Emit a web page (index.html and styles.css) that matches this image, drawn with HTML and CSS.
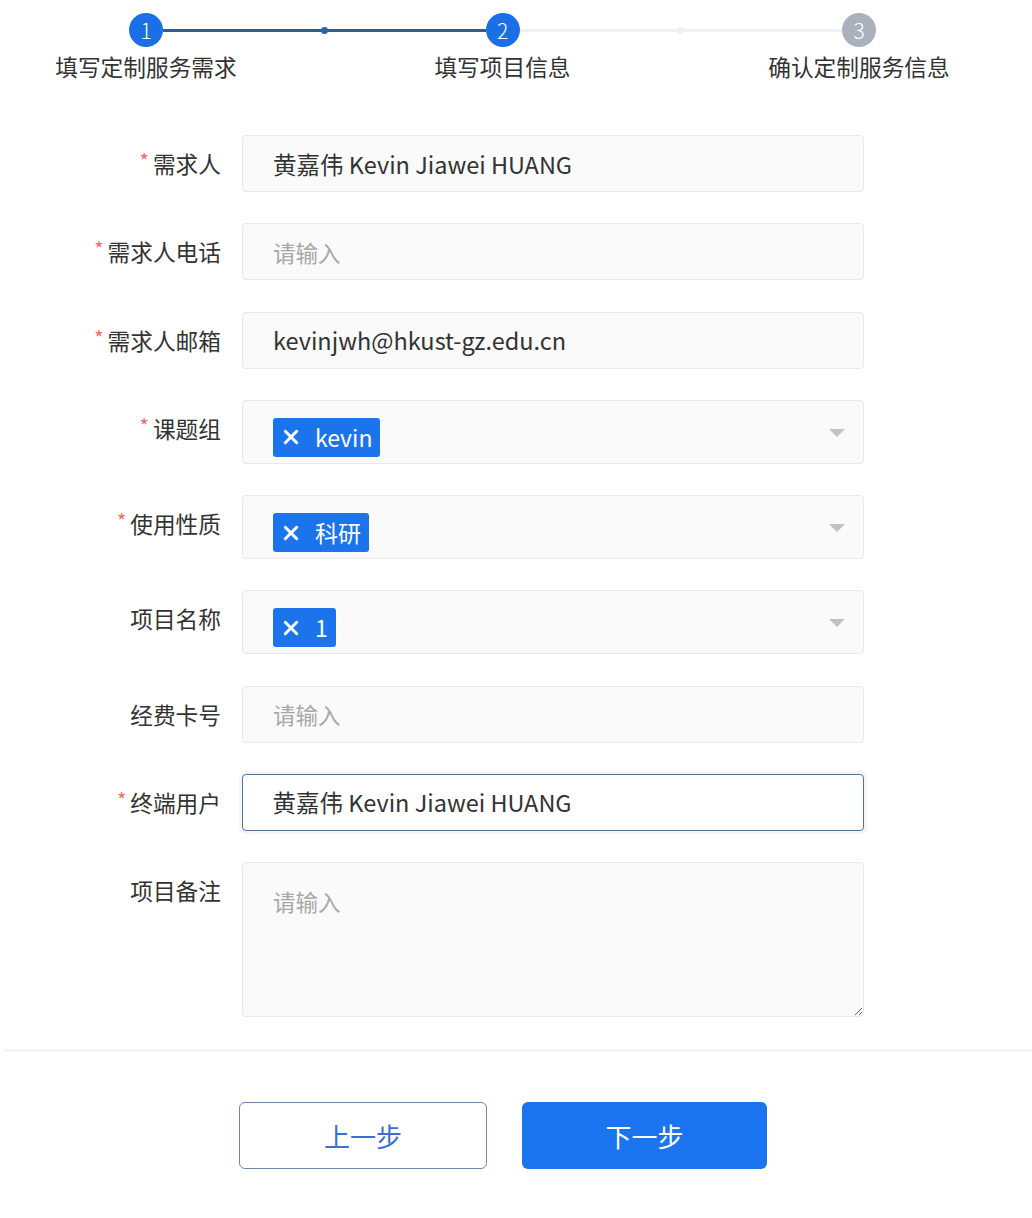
FILE: index.html
```html
<!DOCTYPE html>
<html lang="zh-CN">
<head>
<meta charset="utf-8">
<title>填写项目信息</title>
<link rel="stylesheet" href="styles.css">
</head>
<body>
<div class="page">
  <div class="steps">
    <div class="step-track">
      <span class="dot dot-done">1</span>
      <span class="link link-done"></span>
      <span class="dot dot-done">2</span>
      <span class="link"></span>
      <span class="dot dot-todo">3</span>
    </div>
    <div class="step-labels">
      <span>填写定制服务需求</span>
      <span>填写项目信息</span>
      <span>确认定制服务信息</span>
    </div>
  </div>

  <form class="form">
    <div class="row">
      <label class="label req">需求人</label>
      <input class="field" type="text" value="黄嘉伟 Kevin Jiawei HUANG">
    </div>
    <div class="row">
      <label class="label req">需求人电话</label>
      <input class="field" type="text" placeholder="请输入">
    </div>
    <div class="row">
      <label class="label req">需求人邮箱</label>
      <input class="field" type="text" value="kevinjwh@hkust-gz.edu.cn">
    </div>
    <div class="row">
      <label class="label req">课题组</label>
      <div class="select">
        <span class="tag"><svg class="tag-x" viewBox="0 0 14 14"><path d="M2 2L12 12M12 2L2 12"/></svg>kevin</span>
        <span class="caret"></span>
      </div>
    </div>
    <div class="row">
      <label class="label req">使用性质</label>
      <div class="select">
        <span class="tag"><svg class="tag-x" viewBox="0 0 14 14"><path d="M2 2L12 12M12 2L2 12"/></svg>科研</span>
        <span class="caret"></span>
      </div>
    </div>
    <div class="row">
      <label class="label">项目名称</label>
      <div class="select">
        <span class="tag"><svg class="tag-x" viewBox="0 0 14 14"><path d="M2 2L12 12M12 2L2 12"/></svg>1</span>
        <span class="caret"></span>
      </div>
    </div>
    <div class="row">
      <label class="label">经费卡号</label>
      <input class="field" type="text" placeholder="请输入">
    </div>
    <div class="row">
      <label class="label req">终端用户</label>
      <input class="field field-active" type="text" value="黄嘉伟 Kevin Jiawei HUANG">
    </div>
    <div class="row">
      <label class="label">项目备注</label>
      <textarea class="field area" placeholder="请输入"></textarea>
    </div>
  </form>

  <div class="divider"></div>

  <div class="actions">
    <button class="btn btn-ghost" type="button">上一步</button>
    <button class="btn btn-primary" type="button">下一步</button>
  </div>
</div>
</body>
</html>
```

FILE: styles.css
```css
* {
  box-sizing: border-box;
}

html, body {
  margin: 0;
  background: #ffffff;
}

body {
  font-family: "Noto Sans CJK SC", "Noto Sans", sans-serif;
  color: #333333;
}

.page {
  width: 1032px;
  height: 1218px;
  overflow: hidden;
}

/* ---- step indicator ---- */
.steps {
  padding-top: 13px;
}

.step-track {
  display: flex;
  align-items: center;
  margin-left: 129px;
  width: 747px;
}

.dot {
  flex: 0 0 34px;
  width: 34px;
  height: 34px;
  border-radius: 50%;
  color: #ffffff;
  font-size: 21px;
  font-weight: 300;
  line-height: 34px;
  text-align: center;
}

.dot-done {
  background: #1b6fe6;
}

.dot-todo {
  background: #a9b1bd;
}

.link {
  position: relative;
  flex: 1;
  height: 3px;
  background: #f0f1f2;
}

.link::after {
  content: "";
  position: absolute;
  left: 50%;
  top: 50%;
  width: 7px;
  height: 7px;
  margin: -3.5px 0 0 -3.5px;
  border-radius: 50%;
  background: #eef0f2;
}

.link-done {
  background: #2f5e8e;
}

.link-done::after {
  background: #2a64a8;
}

.step-labels {
  display: grid;
  grid-template-columns: repeat(3, 220px);
  column-gap: 136.5px;
  margin-left: 36px;
  margin-top: 6px;
  font-size: 22.7px;
  line-height: 28px;
  color: #333333;
  text-align: center;
}

/* ---- form ---- */
.form {
  display: flex;
  flex-direction: column;
  gap: 31.25px;
  margin-top: 54px;
}

.row {
  display: flex;
  align-items: flex-start;
}

.label {
  flex: 0 0 242px;
  height: 57px;
  padding-right: 21px;
  text-align: right;
  font-size: 22.7px;
  line-height: 57px;
  color: #333333;
  white-space: nowrap;
}

.req::before {
  content: "*";
  display: inline-block;
  vertical-align: top;
  height: 57px;
  color: #f26a6a;
  font-size: 20px;
  line-height: 52px;
  margin-right: 4px;
}

.field {
  width: 622px;
  height: 57px;
  padding: 0 30px;
  border: 1px solid #e8e8e8;
  border-radius: 4px;
  background: #fafafa;
  font-family: inherit;
  font-size: 23.5px;
  color: #333333;
  outline: none;
}

.field::placeholder {
  color: #a8a8a8;
  font-size: 22.5px;
}

.field-active {
  background: #ffffff;
  border: 1.5px solid #4e7396;
  box-shadow: 0 0 0 3px rgba(120, 180, 230, 0.12);
  padding-left: 29.5px;
}

.area {
  display: block;
  height: 155px;
  padding-top: 22px;
  resize: vertical;
}

.select {
  position: relative;
  width: 622px;
  height: 64px;
  padding: 17px 30px 0;
  border: 1px solid #e8e8e8;
  border-radius: 4px;
  background: #fafafa;
}

.tag {
  display: inline-flex;
  align-items: center;
  height: 39px;
  padding: 0 8px 0 10px;
  border-radius: 3px;
  background: #1b74ec;
  color: #ffffff;
  font-size: 23px;
  line-height: 39px;
}

.tag-x {
  width: 16px;
  height: 16px;
  margin-right: 16px;
  fill: none;
  stroke: #ffffff;
  stroke-width: 2.6;
  stroke-linecap: round;
}

.caret {
  position: absolute;
  right: 18px;
  top: 28px;
  width: 0;
  height: 0;
  border-left: 8px solid transparent;
  border-right: 8px solid transparent;
  border-top: 8px solid #c2c2c2;
}

/* ---- footer ---- */
.divider {
  height: 3px;
  margin: 32px 0 0 5px;
  background: #f4f4f4;
}

.actions {
  display: flex;
  gap: 35px;
  margin: 50px 0 0 239px;
}

.btn {
  height: 67px;
  border-radius: 6px;
  font-family: inherit;
  font-size: 26px;
  cursor: pointer;
}

.btn-ghost {
  width: 248px;
  background: #ffffff;
  border: 1.5px solid #6a86a8;
  color: #3d6fd2;
}

.btn-primary {
  width: 245px;
  background: #1b74f0;
  border: none;
  color: #ffffff;
}
```
